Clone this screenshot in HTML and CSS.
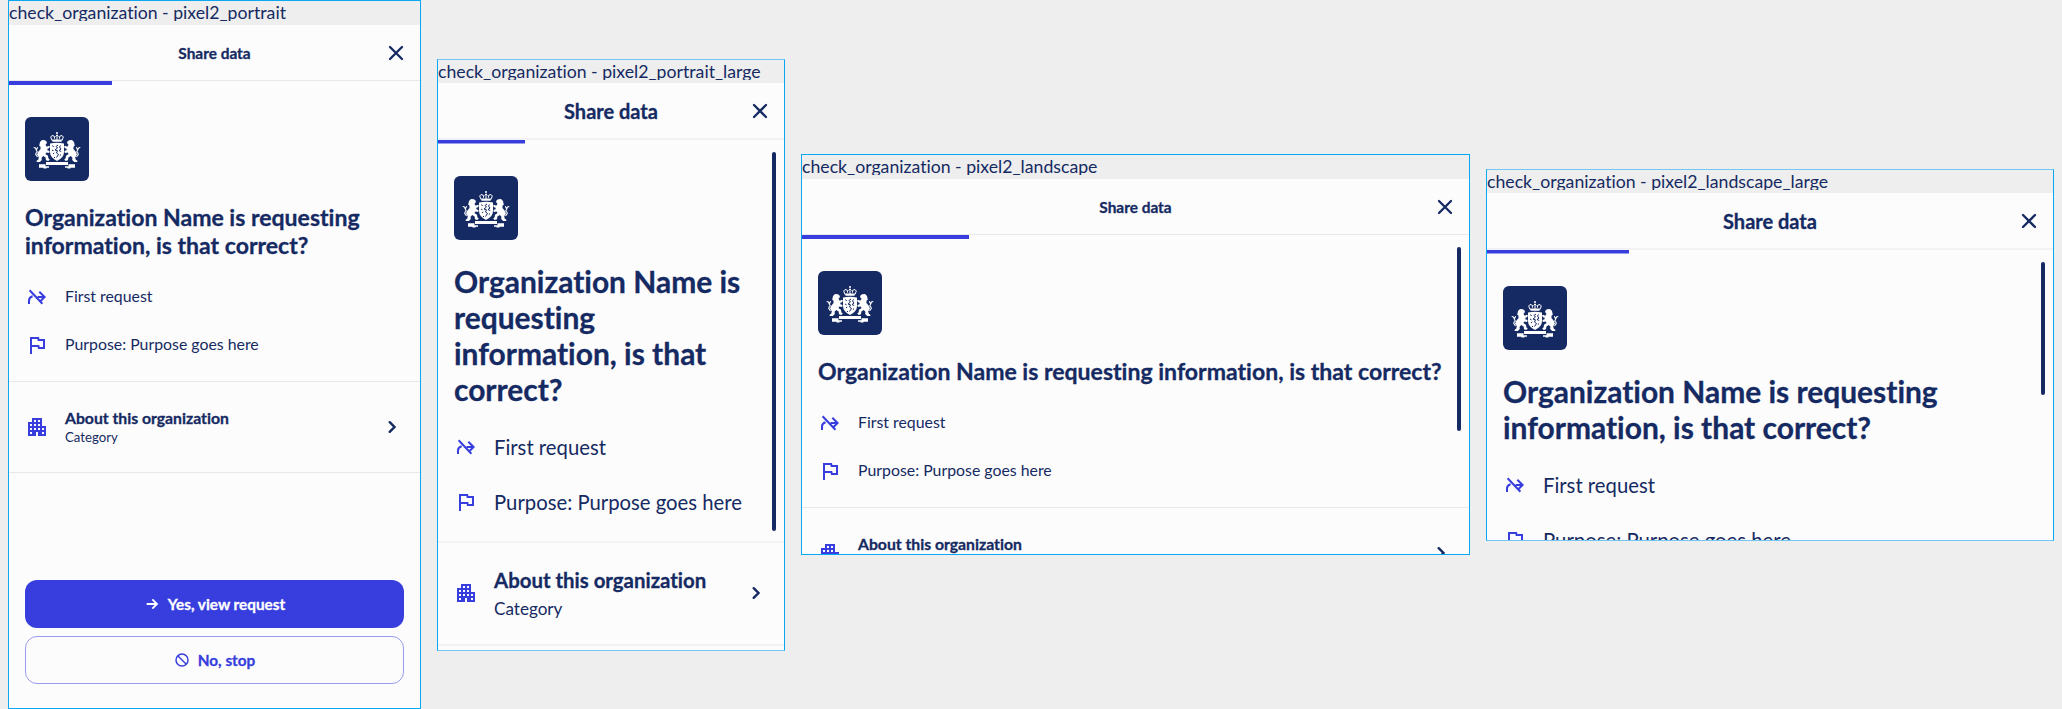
FILE: index.html
```html
<!DOCTYPE html>
<html lang="en">
<head>
<meta charset="utf-8">
<title>check_organization</title>
<link rel="stylesheet" href="styles.css">
</head>
<body>
<svg class="sprite" aria-hidden="true">
  <symbol id="close" viewBox="0 0 24 24"><path d="M6 6l12 12M18 6L6 18" fill="none" stroke="currentColor" stroke-width="2.3" stroke-linecap="round"/></symbol>
  <symbol id="chevron" viewBox="0 0 24 24"><path d="M9.7 7.2l4.8 4.8-4.8 4.8" fill="none" stroke="currentColor" stroke-width="2.4" stroke-linecap="round"/></symbol>
  <symbol id="first" viewBox="0 0 24 24"><path d="M4.600 5.300L17.400 18.700M4 19v-3.500q0-3.200 3.600-4.200M14.300 6.700l5.300 5.300-3.800 3.800M12.600 12h7" fill="none" stroke="currentColor" stroke-width="2"/></symbol>
  <symbol id="flag" viewBox="0 0 24 24"><path fill="currentColor" d="M12.36 6l.4 2H18v6h-3.360l-.4-2H7V6h5.360M14 4H5v17h2v-7h5.600l.4 2h7V6h-5.600L14 4z"/></symbol>
  <symbol id="building" viewBox="0 0 24 24"><path fill="currentColor" d="M17 11V3H7v4H3v14h8v-4h2v4h8V11h-4zM7 19H5v-2h2v2zm0-4H5v-2h2v2zm0-4H5V9h2v2zm4 4H9v-2h2v2zm0-4H9V9h2v2zm0-4H9V5h2v2zm4 8h-2v-2h2v2zm0-4h-2V9h2v2zm0-4h-2V5h2v2zm4 12h-2v-2h2v2zm0-4h-2v-2h2v2z"/></symbol>
  <symbol id="arrow" viewBox="0 0 24 24"><path d="M4 12h15M12.500 5l7 7-7 7" fill="none" stroke="currentColor" stroke-width="2.700"/></symbol>
  <symbol id="block" viewBox="0 0 24 24"><path d="M5.600 5.600l12.800 12.800" stroke="currentColor" stroke-width="2.200"/><circle cx="12" cy="12" r="9" fill="none" stroke="currentColor" stroke-width="2.200"/></symbol>
  <symbol id="lion" viewBox="0 0 64 64">
    <path fill="#fff" d="M15 25l2-2 3 .3 2 1.800-.6 2-1 .6 1.400 2 2.200-1 1 1-1 1.600-1.600.4v1.600l2.200.6-.4 2-2.800-.4-1 1.600 2.600 1.600.4 2.600 1.400 1.400-1.600 1.400-2.200-.8-.4-2.800-2.400-1.400-1.600 1.600.2 2.400-2 2-3.200 0 .2-1.600 1.400-.8.6-2.400-1.800-2.800 1.600-3.200 2-2.200-.2-2.600-1.200-.8z"/>
    <path fill="none" stroke="#fff" stroke-width="1.100" d="M12.500 40l-1.800-2.600.8-2.200M12.500 35.500l-1.200-2.500 1.400-2.800M11.500 33.500l-1-2.500-1.800-.5"/>
    <path fill="#fff" d="M14 47.300h6.500v2H24v1.500h-2.500v.7h-3v-.7H14z"/>
  </symbol>
  <symbol id="emblem" viewBox="0 0 64 64">
    <use href="#lion" width="64" height="64"/>
    <use href="#lion" width="64" height="64" transform="matrix(-1 0 0 1 64 0)"/>
    <path fill="#fff" d="M21 45h22v3H21z"/>
    <path fill="#fff" d="M25 26.500q7-1.700 14 0v8.500q0 5.500-7 9-7-3.500-7-9z"/>
    <path fill="none" stroke="#152a62" stroke-width="1" d="M33 28l-2 1.500 1.500 1.500-2.500 2 2.500.8-1 2.200 2 1.500-2 3M35.500 28.500l-1 1.500 1.500 2-2 1.500 2.200 1M27.500 28.500l1 1.500M27 33l1.500.8M28 37l1.200-1M36 37.500l-1.200 1.200M29 40l1 1"/>
    <path fill="none" stroke="#fff" stroke-width="1" d="M27 23.500L25.700 20l1.300-1.500 2.300.7.300 2.500M37 23.500l1.300-3.500-1.300-1.500-2.300.7-.3 2.500M32 23v-5.500M30.500 19.500L32 18l1.500 1.500M31 16h2M32 15v2"/>
    <path fill="#fff" d="M27 22.500h10l-.5 2.200h-9z"/>
  </symbol>
</svg>

<main class="board">
  <section class="panel portrait">
    <div class="label">check_organization - pixel2_portrait</div>
    <div class="screen">
      <header class="bar"><h1>Share data</h1><svg class="icon close"><use href="#close"/></svg><div class="progress"></div></header>
      <div class="intro">
        <svg class="logo"><use href="#emblem"/></svg>
        <h2>Organization Name is requesting information, is that correct?</h2>
        <div class="row"><svg class="icon"><use href="#first"/></svg><span>First request</span></div>
        <div class="row"><svg class="icon"><use href="#flag"/></svg><span>Purpose: Purpose goes here</span></div>
      </div>
      <div class="about"><svg class="icon"><use href="#building"/></svg><div class="about-text"><b>About this organization</b><span>Category</span></div><svg class="icon chevron"><use href="#chevron"/></svg></div>
      <div class="actions">
        <button class="btn primary"><svg class="small"><use href="#arrow"/></svg>Yes, view request</button>
        <button class="btn secondary"><svg class="small"><use href="#block"/></svg>No, stop</button>
      </div>
    </div>
  </section>

  <section class="panel portrait-large large">
    <div class="label">check_organization - pixel2_portrait_large</div>
    <div class="screen">
      <header class="bar"><h1>Share data</h1><svg class="icon close"><use href="#close"/></svg><div class="progress"></div></header>
      <div class="intro">
        <svg class="logo"><use href="#emblem"/></svg>
        <h2>Organization Name is<br>requesting<br>information, is that<br>correct?</h2>
        <div class="row"><svg class="icon"><use href="#first"/></svg><span>First request</span></div>
        <div class="row"><svg class="icon"><use href="#flag"/></svg><span>Purpose: Purpose goes here</span></div>
      </div>
      <div class="about"><svg class="icon"><use href="#building"/></svg><div class="about-text"><b>About this organization</b><span>Category</span></div><svg class="icon chevron"><use href="#chevron"/></svg></div>
      <div class="thumb"></div>
    </div>
  </section>

  <section class="panel landscape">
    <div class="label">check_organization - pixel2_landscape</div>
    <div class="screen">
      <header class="bar"><h1>Share data</h1><svg class="icon close"><use href="#close"/></svg><div class="progress"></div></header>
      <div class="intro">
        <svg class="logo"><use href="#emblem"/></svg>
        <h2>Organization Name is requesting information, is that correct?</h2>
        <div class="row"><svg class="icon"><use href="#first"/></svg><span>First request</span></div>
        <div class="row"><svg class="icon"><use href="#flag"/></svg><span>Purpose: Purpose goes here</span></div>
      </div>
      <div class="about"><svg class="icon"><use href="#building"/></svg><div class="about-text"><b>About this organization</b></div><svg class="icon chevron"><use href="#chevron"/></svg></div>
      <div class="thumb"></div>
    </div>
  </section>

  <section class="panel landscape-large large">
    <div class="label">check_organization - pixel2_landscape_large</div>
    <div class="screen">
      <header class="bar"><h1>Share data</h1><svg class="icon close"><use href="#close"/></svg><div class="progress"></div></header>
      <div class="intro">
        <svg class="logo"><use href="#emblem"/></svg>
        <h2>Organization Name is requesting<br>information, is that correct?</h2>
        <div class="row"><svg class="icon"><use href="#first"/></svg><span>First request</span></div>
        <div class="row"><svg class="icon"><use href="#flag"/></svg><span>Purpose: Purpose goes here</span></div>
      </div>
      <div class="thumb"></div>
    </div>
  </section>
</main>
</body>
</html>
```
FILE: styles.css
```css
* { box-sizing: border-box; }
body {
  margin: 0;
  background: #eee;
  color: #152a62;
  font-family: Lato, "Noto Sans", sans-serif;
  font-variant-ligatures: none;
  overflow: hidden;
}
h1, h2 { margin: 0; font-weight: 700; }
h1, h2, b, .btn { -webkit-text-stroke: 0.3px currentColor; }
.sprite { position: absolute; width: 0; height: 0; }

.board {
  display: flex;
  align-items: center;
  gap: 16px;
  height: 709px;
  padding: 0 8px;
}
.panel {
  --head: 23.05px;
  --head-line: 28px;
  --title: 15.4px;
  --body: 15.85px;
  --row: 48px;
  --about: 15.75px;
  --about-line: 21px;
  --cat: 13.2px;
  --cat-line: 19px;
  --about-height: 91px;
  flex: none;
  display: flex;
  flex-direction: column;
  border: 1px solid #08a9f2;
  overflow: hidden;
}
.large {
  --head: 29.95px;
  --head-line: 36px;
  --title: 20px;
  --body: 20.3px;
  --row: 55px;
  --about: 20.4px;
  --about-line: 31px;
  --cat: 17.1px;
  --cat-line: 26px;
  --about-height: 103px;
  border-top-color: #72c8f2;
  border-bottom-color: #72c8f2;
}
.portrait { width: 413px; height: 709px; }
.portrait-large { width: 348px; height: 592px; }
.landscape { width: 669px; height: 401px; }
.landscape-large { width: 568px; height: 372px; }

.label {
  flex: none;
  height: 20px;
  margin-bottom: 4px;
  overflow: hidden;
  font-size: 17.68px;
  line-height: 24px;
  white-space: nowrap;
}
.large .label { margin-bottom: 3px; }
.screen {
  position: relative;
  flex: 1;
  min-height: 0;
  display: flex;
  flex-direction: column;
  background: #fcfcfc;
  overflow: hidden;
}
.icon { flex: none; width: 24px; height: 24px; }

.bar {
  position: relative;
  flex: none;
  display: grid;
  grid-template-columns: 24px 1fr 24px;
  align-items: center;
  height: 56px;
  padding: 1px 12px 0;
  border-bottom: 1px solid #e7e7ed;
}
.large .bar { height: 57px; padding-top: 2px; border-bottom: 2px solid #f2f2f4; }
.bar h1 {
  grid-column: 2;
  font-size: var(--title);
  line-height: 26px;
  text-align: center;
}
.progress {
  position: absolute;
  top: 56px;
  left: 0;
  width: 25%;
  height: 4px;
  background: #383ede;
}
.large .progress { top: 57px; border-bottom: 1px solid #9a9dee; }

.intro {
  flex: none;
  padding: 36px 16px 12px;
  border-bottom: 1px solid #e8e8ea;
}
.large .intro { padding-bottom: 11px; border-bottom: 2px solid #f2f2f3; }
.logo {
  display: block;
  width: 64px;
  height: 64px;
  margin-bottom: 22px;
  border-radius: 6px;
  background: #152a62;
}
.intro h2 {
  margin-bottom: 14px;
  font-size: var(--head);
  line-height: var(--head-line);
}
.large h2 { padding-top: 1px; margin-bottom: 13px; }
.landscape h2 { white-space: nowrap; }
.row {
  display: flex;
  align-items: center;
  gap: 16px;
  height: var(--row);
  font-size: var(--body);
}
.row span { padding-bottom: 3px; }
.large .row span { padding-bottom: 1px; }
.row .icon, .about .icon { color: #383ede; }

.about {
  flex: none;
  display: flex;
  align-items: center;
  gap: 16px;
  height: var(--about-height);
  padding: 0 16px;
  border-bottom: 1px solid #e8e8ea;
}
.large .about { border-bottom: 2px solid #f2f2f3; }
.about-text { flex: 1; display: flex; flex-direction: column; min-height: calc(var(--about-line) + var(--cat-line)); }
.about-text b { font-size: var(--about); line-height: var(--about-line); }
.about-text span { font-size: var(--cat); line-height: var(--cat-line); }
.about .chevron { color: #152a62; }

.actions {
  display: flex;
  flex-direction: column;
  gap: 8px;
  margin-top: auto;
  padding: 0 16px 24px;
}
.btn {
  display: flex;
  align-items: center;
  justify-content: center;
  gap: 8px;
  height: 48px;
  padding: 0;
  border: 0;
  border-radius: 12px;
  font: 700 15.3px Lato, "Noto Sans", sans-serif;
}
.small { width: 16px; height: 16px; }
.primary { background: #383ede; color: #fff; }
.secondary { border: 1px solid #999cee; background: #fcfcfc; color: #383ede; }

.thumb {
  position: absolute;
  top: 68px;
  right: 8px;
  width: 4px;
  border-radius: 2px;
  background: #152a62;
}
.large .thumb { top: 69px; }
.portrait-large .thumb { height: 379px; }
.landscape .thumb { height: 184px; }
.landscape-large .thumb { height: 133px; }
```
